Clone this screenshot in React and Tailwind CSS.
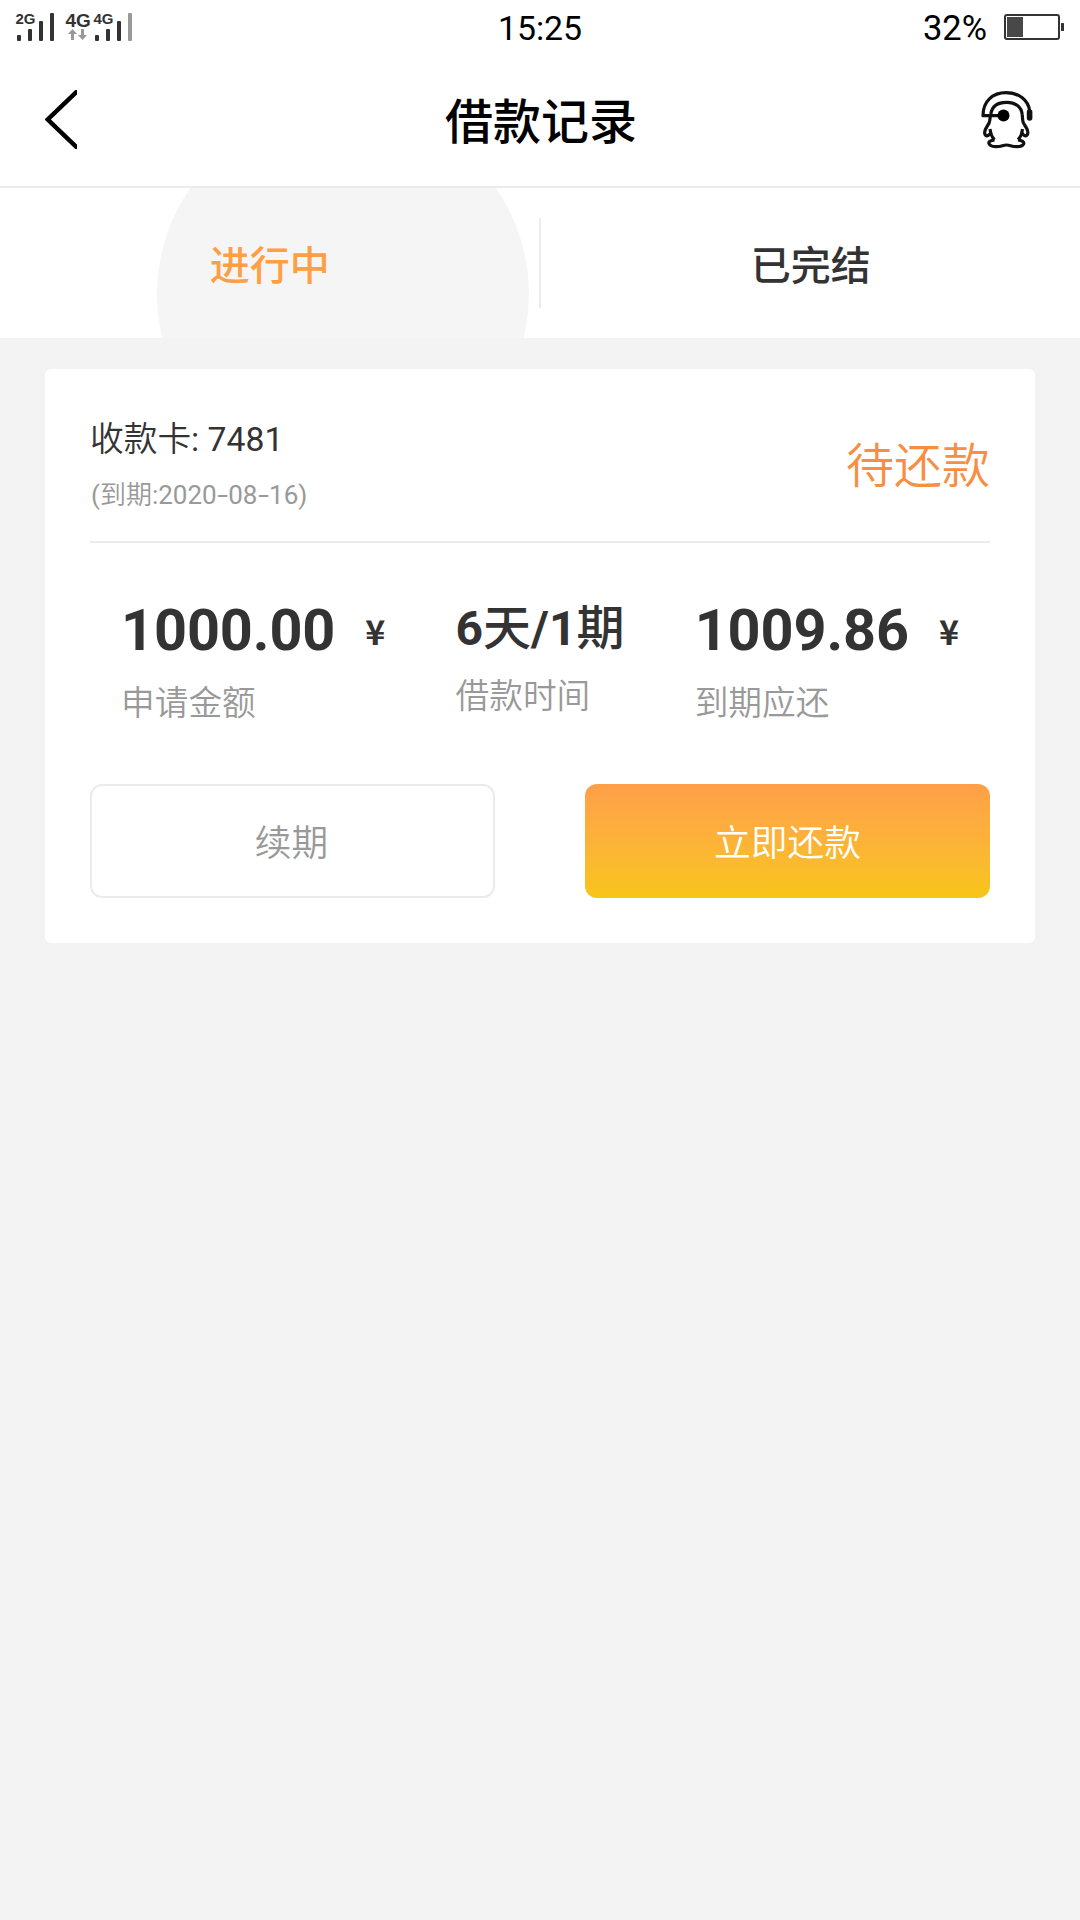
import React from 'react';

const SignalIcon = () => (
  <svg width="136" height="44" viewBox="0 0 136 44" fill="#333333" fontFamily="Liberation Sans, sans-serif" fontWeight="700">
    <text x="15.5" y="24" fontSize="15">2G</text>
    <rect x="17" y="35" width="4" height="6" rx="1" />
    <rect x="28" y="29" width="4" height="12" rx="1" />
    <rect x="39" y="21" width="4" height="20" rx="1" />
    <rect x="50" y="13" width="4" height="28" rx="1" />
    <text x="65.5" y="27" fontSize="19">4G</text>
    <path fill="#999999" d="M72.5 29l4.5 5h-3v6h-3v-6h-3zM82.5 40l4.5-5h-3v-6h-3v6h-3z" />
    <text x="93.5" y="24" fontSize="15">4G</text>
    <rect x="95" y="35" width="4" height="6" rx="1" />
    <rect x="106" y="29" width="4" height="12" rx="1" />
    <rect x="117" y="21" width="4" height="20" rx="1" />
    <rect x="128" y="13" width="4" height="28" rx="1" fill="#999999" />
  </svg>
);

const BatteryIcon = () => (
  <svg width="60" height="26" viewBox="0 0 60 26">
    <rect x="1" y="1" width="54" height="24" rx="2" fill="none" stroke="#333333" strokeWidth="2" />
    <rect x="3" y="3" width="16" height="20" fill="#484848" />
    <rect x="57" y="9" width="3" height="8" rx="0.5" fill="#333333" />
  </svg>
);

const BackIcon = () => (
  <svg width="32" height="59" viewBox="0 0 32 59" fill="none" stroke="#000" strokeWidth="4.5">
    <path d="M33 0.5L2.8 29.5L33 58.5" />
  </svg>
);

const ServiceIcon = () => (
  <svg width="52" height="58" viewBox="0 0 52 58" fill="none" stroke="#111" strokeWidth="3.2" strokeLinejoin="round">
    {/* headset */}
    <path d="M20 24.7H2C2 10 12 1.7 25 1.7C38 1.7 47.5 9 48.6 20" />
    <path d="M48.6 21V27" strokeWidth="5.6" strokeLinecap="round" />
    <circle cx="22.5" cy="24.5" r="6" fill="#000" stroke="none" />
    {/* head and arms */}
    <path d="M13.5 48.8C11.5 47 10.5 44.5 9.5 42C8 44.500 6 45.500 4.600 44.300C2.600 42 4 38.500 6 35.500C7.500 33.500 9 31.500 8.800 29C9 27 9.300 25.500 9.800 23C11 15.500 16.500 11.300 25.500 11.300C34.500 11.300 40.500 16 41.200 23.500C41.500 26 41.500 27.500 41.700 29C41.500 31.500 43.200 33.500 44.600 35.500C46.600 38.500 47.800 42 45.800 44.300C44.400 45.500 42.500 44.500 41 42C40 44.500 39 47 37 48.800" />
    <path d="M9 38L10 43M41.500 38L40.500 43" />
    {/* feet */}
    <path d="M13.5 48.8C9.500 49.300 7 51 8.200 53C9.500 55.300 14 55.900 18 55.500C21 55.200 22.500 54 25.500 54C28.500 54 30 55.200 33 55.500C37 55.900 41.500 55.300 42.600 53C43.500 51 41 49.300 37 48.800" />
  </svg>
);

const Stat = ({ value, label }) => (
  <div>
    <div className="flex items-center h-[70px] font-bold text-[#333333]">
      <span className="text-[57.6px] leading-[70px] -tracking-[0.1px]">{value}</span>
      <span className="ml-[30px] text-[34px] leading-[48px] font-['Noto_Sans_CJK_SC',sans-serif]">¥</span>
    </div>
    <div className="mt-3.5 text-[33.7px] leading-[48px] font-[350] text-[#999999]">{label}</div>
  </div>
);

const App = () => {
  return (
    <div className="w-[1080px] h-[1920px] overflow-hidden bg-[#f3f3f3] font-[Roboto,'Noto_Sans_CJK_SC',sans-serif]">
      {/* Status bar */}
      <div className="flex justify-between h-14 bg-white text-black">
        <div className="w-[360px]"><SignalIcon /></div>
        <div className="pt-[9px] text-[33.8px] leading-10">15:25</div>
        <div className="flex justify-end w-[360px] pr-4 pt-2">
          <span className="mr-[17px] text-[34.5px] leading-10">32%</span>
          <div className="pt-1.5"><BatteryIcon /></div>
        </div>
      </div>

      {/* Header */}
      <header className="flex items-center justify-between h-[132px] px-[45px] pb-[7px] bg-white border-b-2 border-[#ebebeb]">
        <div className="w-[60px] pt-1"><BackIcon /></div>
        <h1 className="pt-2.5 pl-0.5 text-[48px] leading-[60px] font-medium text-black">借款记录</h1>
        <div className="flex justify-end w-[60px] pt-1 pr-0.5"><ServiceIcon /></div>
      </header>

      {/* Tabs */}
      <div className="flex items-center h-[150px] bg-white text-[40px] font-medium">
        <div className="relative flex flex-1 items-center justify-center h-full overflow-hidden text-[#ff9f45]">
          <div className="absolute left-[157px] top-[-80px] size-[372px] rounded-full bg-[#f5f5f5]"></div>
          <span className="relative pt-2 pl-px">进行中</span>
        </div>
        <div className="w-0.5 h-[90px] bg-[#ebebeb]"></div>
        <div className="flex flex-1 items-center justify-center pt-2 pl-px text-[#333333]">已完结</div>
      </div>

      {/* Loan card */}
      <div className="mx-[45px] mt-[31px] h-[574px] px-[45px] bg-white rounded-md">
        <div className="flex items-center justify-between h-[174px] border-b-2 border-[#ebebeb]">
          <div className="pt-5">
            <div className="text-[33.7px] leading-[50px] text-[#333333]">
              <span className="font-[350]">收款卡</span>: 7481
            </div>
            <div className="mt-2.5 pl-px text-[26px] leading-[40px] text-[#999999]">
              (<span className="font-[350]">到期</span>:2020<span className="inline-block scale-x-150 mx-[2.2px]">-</span>08<span className="inline-block scale-x-150 mx-[2.2px]">-</span>16)
            </div>
          </div>
          <div className="pt-6 text-[48px] leading-[60px] font-[350] text-[#f88e44]">待还款</div>
        </div>

        <div className="flex justify-between px-[31px] pt-[53px]">
          <Stat value="1000.00" label="申请金额" />
          <div>
            <div className="text-[48px] leading-[66px] font-bold text-[#333333]">
              6<span className="font-medium">天</span>/1<span className="font-medium">期</span>
            </div>
            <div className="mt-[11px] text-[33.7px] leading-[48px] font-[350] text-[#999999]">借款时间</div>
          </div>
          <Stat value="1009.86" label="到期应还" />
        </div>

        <div className="flex justify-between mt-[56px] text-[36.7px]">
          <button className="w-[405px] h-[114px] pt-1.5 pr-0.5 rounded-xl border-2 border-[#ebebeb] font-[350] text-[#999999]">续期</button>
          <button className="w-[405px] h-[114px] pt-1.5 rounded-xl bg-linear-to-b from-[#ff9f49] to-[#f8c516] font-[350] text-white">立即还款</button>
        </div>
      </div>
    </div>
  );
};

export default App;
